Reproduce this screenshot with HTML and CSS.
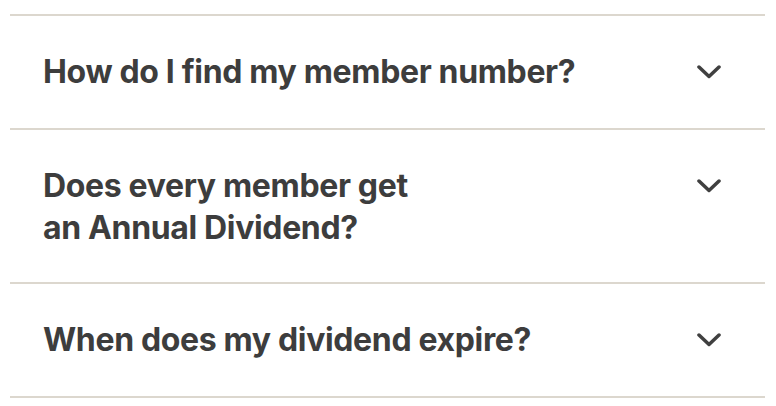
FILE: index.html
```html
<!DOCTYPE html>
<html>
<head>
<meta charset="utf-8">
<link rel="stylesheet" href="styles.css">
</head>
<body>
<div class="faq">
  <div class="item">
    <div class="q">How do I find my member number?</div>
    <div class="btn"><svg class="chev" viewBox="0 0 24 14"><path d="M2 2 L12 11.5 L22 2" /></svg></div>
  </div>
  <div class="item">
    <div class="q">Does every member get<br>an Annual Dividend?</div>
    <div class="btn"><svg class="chev" viewBox="0 0 24 14"><path d="M2 2 L12 11.5 L22 2" /></svg></div>
  </div>
  <div class="item">
    <div class="q">When does my dividend expire?</div>
    <div class="btn"><svg class="chev" viewBox="0 0 24 14"><path d="M2 2 L12 11.5 L22 2" /></svg></div>
  </div>
</div>
</body>
</html>
```
FILE: styles.css
```css
html, body { margin: 0; padding: 0; background: #fff; }
.faq {
  padding: 14px 11px 0 10px;
}
.item {
  display: flex;
  align-items: flex-start;
  justify-content: space-between;
  border-top: 2px solid #dcd7ce;
  padding: 35px 44px 33px 33px;
}
.item:last-child { border-bottom: 2px solid #dcd7ce; }
.q {
  font-family: Inter, "Noto Sans", sans-serif;
  font-weight: 700;
  font-size: 32px;
  line-height: 42px;
  color: #3d3d3d;
  letter-spacing: -0.35px;
}
.btn {
  height: 44px;
  flex: none;
}
.chev {
  display: block;
  width: 24px;
  height: 14px;
  margin-top: 14px;
}
.chev path {
  fill: none;
  stroke: #404040;
  stroke-width: 3.5;
  stroke-linecap: round;
  stroke-linejoin: round;
}
```
